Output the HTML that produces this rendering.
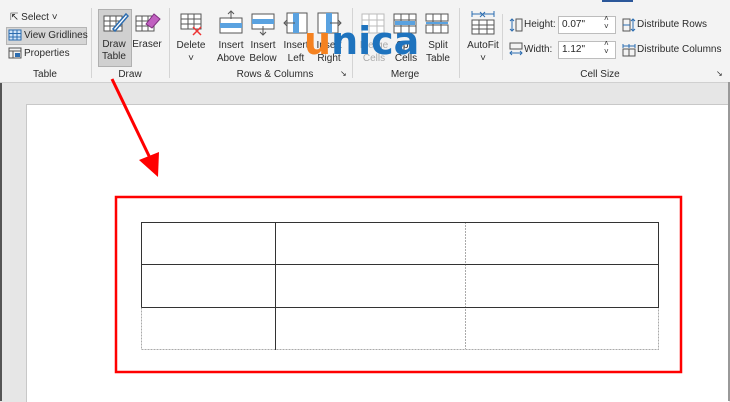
<!DOCTYPE html>
<html><head><style>
body{margin:0;width:730px;height:401px;overflow:hidden;background:#e6e6e6;font-family:"Liberation Sans",sans-serif;font-size:10px;color:#262626;position:relative}
.rib{position:absolute;left:0;top:0;width:730px;height:82px;background:#f3f3f3;border-bottom:1px solid #d0d0d0}
.t{position:absolute;white-space:nowrap;font-size:10px;color:#2b2b2b}
.c{text-align:center}
.sep{position:absolute;top:8px;width:1px;height:70px;background:#d4d4d4}
.box{position:absolute;background:#fff;border:1px solid #bdbdbd;height:16px;width:53px;font-size:10px;line-height:16px;padding-left:3px}
</style></head><body>
<div style="position:absolute;left:0;top:0;width:2px;height:401px;background:#555"></div>
<div class="rib">
<div style="position:absolute;left:602px;top:0;width:31px;height:2px;background:#2b579a"></div>
<div class="t" style="left:10px;top:12px">&#8689; Select ˅</div>
<div style="position:absolute;left:6px;top:27px;width:79px;height:16px;background:#d6d6d6;border:1px solid #b5b5b5"></div>
<svg style="position:absolute;left:8px;top:29px" width="14" height="12"><rect x="1" y="1" width="12" height="10" fill="#cfe3f7" stroke="#2b6cb0"/><path d="M1 4.5H13M1 8H13M5 1V11M9 1V11" stroke="#2b6cb0"/></svg>
<div class="t" style="left:24px;top:30px">View Gridlines</div>
<svg style="position:absolute;left:8px;top:47px" width="14" height="12"><rect x="1" y="1" width="12" height="10" fill="none" stroke="#555"/><path d="M1 4H13M5 4V11" stroke="#555"/><rect x="7" y="6" width="5" height="4" fill="#2b6cb0"/></svg>
<div class="t" style="left:24px;top:48px">Properties</div>
<div class="t c" style="left:20px;top:69px;width:50px">Table</div>
<div class="sep" style="left:91px"></div>
<div style="position:absolute;left:98px;top:9px;width:32px;height:56px;background:#d0d0d0;border:1px solid #b0b0b0"></div>
<svg style="position:absolute;left:101px;top:10px" width="28" height="24"><rect x="3" y="6" width="18" height="15" fill="#fff" stroke="#555"/><path d="M3 11H21M3 16H21M9 6V21M15 6V21" stroke="#555"/><path d="M12 19L25 4L27 6L14 21Z" fill="#fff" stroke="#2b6cb0" stroke-width="1.5"/></svg>
<div class="t c" style="left:97px;top:39px;width:34px;line-height:12px">Draw<br>Table</div>
<svg style="position:absolute;left:134px;top:10px" width="28" height="24"><rect x="2" y="6" width="18" height="15" fill="#fff" stroke="#555"/><path d="M2 11H20M2 16H20M8 6V21M14 6V21" stroke="#555"/><path d="M12 14L20 4L26 9L18 18Z" fill="#c060c0" stroke="#803080"/></svg>
<div class="t c" style="left:130px;top:39px;width:34px">Eraser</div>
<div class="t c" style="left:100px;top:69px;width:60px">Draw</div>
<div class="sep" style="left:169px"></div>
<svg style="position:absolute;left:180px;top:12px" width="24" height="24"><rect x="1" y="2" width="20" height="15" fill="#fff" stroke="#555"/><path d="M1 7H21M1 12H21M8 2V17M14 2V17" stroke="#555"/><path d="M13 15L21 23M21 15L13 23" stroke="#e33" stroke-width="1.5"/></svg>
<div class="t c" style="left:172px;top:39px;width:38px;line-height:13px">Delete<br>˅</div>
<svg style="position:absolute;left:218px;top:10px" width="26" height="26"><rect x="2" y="8" width="22" height="15" fill="#fff" stroke="#555"/><rect x="2" y="13" width="22" height="5" fill="#5aa2e0"/><path d="M13 1V9M10 4L13 1L16 4" stroke="#555" fill="none"/></svg>
<div class="t c" style="left:212px;top:39px;width:38px;line-height:13px">Insert<br>Above</div>
<svg style="position:absolute;left:250px;top:10px" width="26" height="26"><rect x="2" y="4" width="22" height="15" fill="#fff" stroke="#555"/><rect x="2" y="9" width="22" height="5" fill="#5aa2e0"/><path d="M13 16V25M10 22L13 25L16 22" stroke="#555" fill="none"/></svg>
<div class="t c" style="left:244px;top:39px;width:38px;line-height:13px">Insert<br>Below</div>
<svg style="position:absolute;left:283px;top:10px" width="26" height="26"><rect x="4" y="3" width="20" height="20" fill="#fff" stroke="#555"/><rect x="10" y="3" width="6" height="20" fill="#5aa2e0"/><path d="M1 13H12M4 10L1 13L4 16" stroke="#555" fill="none"/></svg>
<div class="t c" style="left:277px;top:39px;width:38px;line-height:13px">Insert<br>Left</div>
<svg style="position:absolute;left:316px;top:10px" width="26" height="26"><rect x="2" y="3" width="20" height="20" fill="#fff" stroke="#555"/><rect x="10" y="3" width="6" height="20" fill="#5aa2e0"/><path d="M14 13H25M22 10L25 13L22 16" stroke="#555" fill="none"/></svg>
<div class="t c" style="left:310px;top:39px;width:38px;line-height:13px">Insert<br>Right</div>
<div class="t c" style="left:215px;top:69px;width:120px">Rows &amp; Columns</div>
<div class="t" style="left:340px;top:69px;font-size:8px">&#8600;</div>
<div class="sep" style="left:352px"></div>
<svg style="position:absolute;left:360px;top:12px" width="26" height="24"><rect x="2" y="2" width="22" height="19" fill="#fff" stroke="#bbb"/><path d="M2 8H24M2 14H24M9 2V21M17 2V21" stroke="#bbb"/></svg>
<div class="t c" style="left:356px;top:39px;width:36px;line-height:13px;color:#aaa">Merge<br>Cells</div>
<svg style="position:absolute;left:392px;top:12px" width="26" height="24"><rect x="2" y="2" width="22" height="19" fill="#fff" stroke="#555"/><path d="M2 8H24M2 14H24M9 2V21M17 2V21" stroke="#555"/><rect x="3" y="9" width="20" height="4" fill="#5aa2e0"/></svg>
<div class="t c" style="left:388px;top:39px;width:36px;line-height:13px">Split<br>Cells</div>
<svg style="position:absolute;left:424px;top:12px" width="26" height="24"><rect x="2" y="2" width="22" height="7" fill="#fff" stroke="#555"/><rect x="2" y="13" width="22" height="8" fill="#fff" stroke="#555"/><path d="M9 2V21M17 2V21" stroke="#555"/><path d="M2 11H24" stroke="#5aa2e0" stroke-width="2"/></svg>
<div class="t c" style="left:420px;top:39px;width:36px;line-height:13px">Split<br>Table</div>
<div class="t c" style="left:375px;top:69px;width:60px">Merge</div>
<div class="sep" style="left:459px"></div>
<svg style="position:absolute;left:470px;top:10px" width="26" height="26"><path d="M2 4H24M2 1V7M24 1V7" stroke="#2b6cb0"/><path d="M10 2L15 7M15 2L10 7" stroke="#2b6cb0"/><rect x="2" y="10" width="22" height="14" fill="#fff" stroke="#555"/><path d="M2 15H24M2 19H24M9 10V24M17 10V24" stroke="#555"/></svg>
<div class="t c" style="left:463px;top:39px;width:40px;line-height:13px">AutoFit<br>˅</div>
<div class="sep" style="left:502px;top:14px;height:46px"></div>
<svg style="position:absolute;left:509px;top:18px" width="14" height="14"><path d="M3 1V13M1 3L3 1L5 3M1 11L3 13L5 11" stroke="#2b6cb0" fill="none"/><rect x="7" y="1" width="6" height="12" fill="none" stroke="#555"/></svg>
<div class="t" style="left:524px;top:19px">Height:</div>
<div class="box" style="left:558px;top:16px">0.07"</div>
<div class="t" style="left:604px;top:15px;font-size:8px;line-height:8px">˄<br>˅</div>
<svg style="position:absolute;left:509px;top:42px" width="14" height="14"><rect x="1" y="1" width="12" height="6" fill="none" stroke="#555"/><path d="M1 11H13M3 9L1 11L3 13M11 9L13 11L11 13" stroke="#2b6cb0" fill="none"/></svg>
<div class="t" style="left:524px;top:44px">Width:</div>
<div class="box" style="left:558px;top:41px">1.12"</div>
<div class="t" style="left:604px;top:40px;font-size:8px;line-height:8px">˄<br>˅</div>
<svg style="position:absolute;left:622px;top:18px" width="14" height="14"><rect x="1" y="1" width="7" height="12" fill="none" stroke="#555"/><path d="M1 7H8M11 1V13M9 3L11 1L13 3M9 11L11 13L13 11" stroke="#2b6cb0" fill="none"/></svg>
<div class="t" style="left:637px;top:19px">Distribute Rows</div>
<svg style="position:absolute;left:622px;top:43px" width="14" height="14"><path d="M1 3H13M1 1V5M13 1V5M7 1V5" stroke="#2b6cb0"/><rect x="1" y="6" width="12" height="7" fill="none" stroke="#555"/><path d="M7 6V13" stroke="#555"/></svg>
<div class="t" style="left:637px;top:44px">Distribute Columns</div>
<div class="t c" style="left:565px;top:69px;width:70px">Cell Size</div>
<div class="t" style="left:716px;top:69px;font-size:8px">&#8600;</div>
<div style="position:absolute;left:304px;top:16px;font-family:'DejaVu Sans',sans-serif;font-weight:bold;font-size:38px;letter-spacing:0px;line-height:50px"><span style="color:#f58220">u</span><span style="color:#1e73be">nica</span></div>
</div>
<div style="position:absolute;left:26px;top:104px;width:702px;height:297px;background:#fff;border-left:1px solid #c8c8c8;border-top:1px solid #c8c8c8"></div>
<div style="position:absolute;left:728px;top:82px;width:2px;height:319px;background:#999"></div>
<svg style="position:absolute;left:0;top:0" width="730" height="401">
<g fill="none" stroke-width="1">
<path d="M141.5 307.5V349.5H658.5V307.5M465.5 222V349" stroke="#aaa" stroke-dasharray="2,1"/>
<path d="M141.5 307.5V222.5H658.5V307.5H141.5M141.5 264.5H658.5M275.5 222V350" stroke="#333"/>
</g>
<rect x="116" y="197" width="565" height="175" fill="none" stroke="#f00" stroke-width="2.5"/>
<path d="M112 79L150 158" stroke="#f00" stroke-width="3"/>
<path d="M139 160L158 177L159 152Z" fill="#f00"/>
</svg>
</body></html>
